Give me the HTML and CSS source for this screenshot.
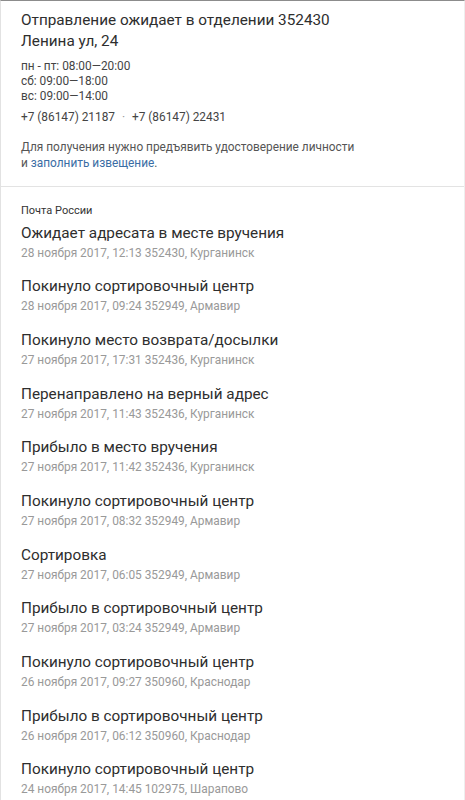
FILE: index.html
```html
<!DOCTYPE html>
<html lang="ru">
<head>
  <meta charset="UTF-8" />
  <meta name="viewport" content="width=device-width, initial-scale=1" />
  <title>Отслеживание</title>
  <link rel="stylesheet" href="styles.css">
</head>
<body>

  <div class="card">
    <div class="office">
      <h1 class="office-title">Отправление ожидает в отделении 352430<br>Ленина ул, 24</h1>
      <div class="hours">
        <div>пн - пт: 08:00—20:00</div>
        <div>сб: 09:00—18:00</div>
        <div>вс: 09:00—14:00</div>
      </div>
      <div class="phones">+7 (86147) 21187 <span class="dot">·</span> +7 (86147) 22431</div>
      <p class="note">Для получения нужно предъявить удостоверение личности<br>и <a href="#">заполнить извещение</a>.</p>
    </div>

    <div class="history">
      <div class="carrier">Почта России</div>
      <ul class="events">
        <li><div class="ev-title">Ожидает адресата в месте вручения</div><div class="ev-meta">28 ноября 2017, 12:13 352430, Курганинск</div></li>
        <li><div class="ev-title">Покинуло сортировочный центр</div><div class="ev-meta">28 ноября 2017, 09:24 352949, Армавир</div></li>
        <li><div class="ev-title">Покинуло место возврата/досылки</div><div class="ev-meta">27 ноября 2017, 17:31 352436, Курганинск</div></li>
        <li><div class="ev-title">Перенаправлено на верный адрес</div><div class="ev-meta">27 ноября 2017, 11:43 352436, Курганинск</div></li>
        <li><div class="ev-title">Прибыло в место вручения</div><div class="ev-meta">27 ноября 2017, 11:42 352436, Курганинск</div></li>
        <li><div class="ev-title">Покинуло сортировочный центр</div><div class="ev-meta">27 ноября 2017, 08:32 352949, Армавир</div></li>
        <li><div class="ev-title">Сортировка</div><div class="ev-meta">27 ноября 2017, 06:05 352949, Армавир</div></li>
        <li><div class="ev-title">Прибыло в сортировочный центр</div><div class="ev-meta">27 ноября 2017, 03:24 352949, Армавир</div></li>
        <li><div class="ev-title">Покинуло сортировочный центр</div><div class="ev-meta">26 ноября 2017, 09:27 350960, Краснодар</div></li>
        <li><div class="ev-title">Прибыло в сортировочный центр</div><div class="ev-meta">26 ноября 2017, 06:12 350960, Краснодар</div></li>
        <li><div class="ev-title">Покинуло сортировочный центр</div><div class="ev-meta">24 ноября 2017, 14:45 102975, Шарапово</div></li>
      </ul>
    </div>
  </div>

</body>
</html>
```

FILE: styles.css
```css
/* Page */
body {
  margin: 0;
  background-color: #fff;
  font-family: Roboto, "Noto Sans", Arial, sans-serif;
  color: #333;
}
.card {
  border-top: 1px solid #8c8c8c;
  border-left: 1px solid #e2e2e2;
  border-right: 1px solid #eee;
  min-height: 800px;
  box-sizing: border-box;
}

/* Office block */
.office {
  padding: 9px 20px 14.5px 20px;
  border-bottom: 1px solid #e3e3e3;
}
.office-title {
  margin: 0;
  font-size: 15.3px;
  font-weight: normal;
  line-height: 21px;
  color: #2e2e2e;
}
.hours {
  margin-top: 7px;
  font-size: 11.85px;
  line-height: 15px;
  color: #444;
}
.phones {
  margin-top: 5px;
  font-size: 11.85px;
  line-height: 16px;
  color: #444;
}
.dot {
  color: #999;
  padding: 0 4px;
}
.note {
  margin: 14px 0 0 0;
  font-size: 11.85px;
  line-height: 16px;
  color: #555;
}
.note a {
  color: #3a6da4;
  text-decoration: none;
}

/* History */
.history {
  padding: 17px 20px 0 20px;
}
.carrier {
  font-size: 11px;
  line-height: 14px;
  color: #333;
}
.events {
  list-style: none;
  margin: 0;
  padding: 0;
}
.events li {
  padding: 5px 0 8.7px 0;
}
.ev-title {
  font-size: 15.3px;
  line-height: 21px;
  color: #2e2e2e;
}
.ev-meta {
  font-size: 11.9px;
  line-height: 19px;
  color: #999;
}
```
